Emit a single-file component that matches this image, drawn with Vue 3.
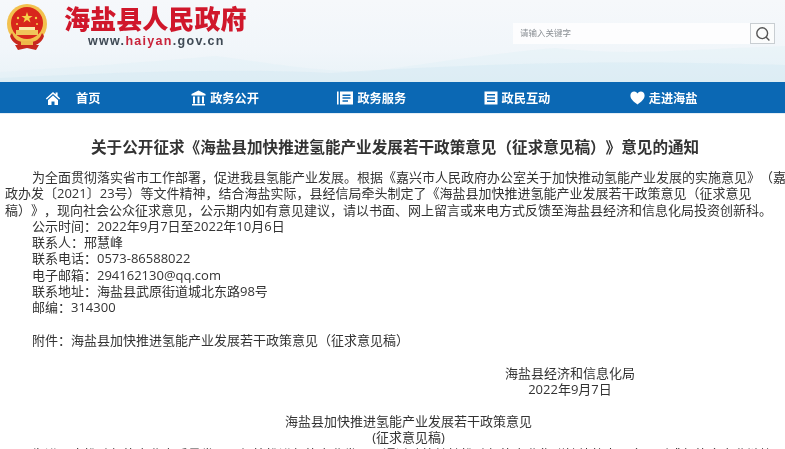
<template>
  <div class="page">
    <header class="site-head">
      <svg class="hills" width="785" height="50" viewBox="0 0 785 50" preserveAspectRatio="none">
        <path d="M0 40C90 34 150 30 215 24c50 6 85 14 150 16 60-8 120-18 190-24 70 8 130 2 230-2v36H0z" fill="#dcedf5" opacity=".3" />
        <path d="M0 46c120-6 230-10 330-5 120-8 260-14 455-8v17H0z" fill="#d3e8f2" opacity=".4" />
      </svg>
      <div class="brand">
        <svg class="emblem" width="46" height="48" viewBox="0 0 46 48">
          <circle cx="23" cy="21" r="20" fill="#f2c14e" />
          <circle cx="23" cy="20" r="16" fill="#d8261c" />
          <polygon points="23,9 24.4,13 28.6,13 25.2,15.5 26.5,19.5 23,17 19.5,19.5 20.8,15.5 17.4,13 21.6,13" fill="#f5d04a" />
          <circle cx="14" cy="15" r="1.2" fill="#f5d04a" />
          <circle cx="32" cy="15" r="1.2" fill="#f5d04a" />
          <circle cx="13" cy="21" r="1" fill="#f5d04a" />
          <circle cx="33" cy="21" r="1" fill="#f5d04a" />
          <path d="M12 27h22v5H12z" fill="#f0c45a" />
          <path d="M15 24h16v3H15z" fill="#fbe9a8" />
          <path d="M8 30c2 6 6 9 15 10 9-1 13-4 15-10l2 3c-2 7-8 10-17 11-9-1-15-4-17-11z" fill="#c8281e" />
          <path d="M11 42h24l-3 5-9-2-9 2z" fill="#c8281e" />
          <path d="M17 38h12v4H17z" fill="#eeb94a" />
        </svg>
        <div class="brand-text">
          <div class="site-name">海盐县人民政府</div>
          <div class="site-url">www.<span class="url-red">haiyan</span>.gov.cn</div>
        </div>
      </div>
      <div class="search">
        <div class="search-input">请输入关键字</div>
        <div class="search-btn">
          <svg width="16" height="16" viewBox="0 0 16 16" fill="none" stroke="#555" stroke-width="1.4">
            <circle cx="7.2" cy="7.2" r="5.4" />
            <path d="M11 11l3.4 3.4" />
          </svg>
        </div>
      </div>
    </header>

    <nav class="main-nav">
      <div v-for="item in navItems" :key="item.label" class="nav-item">
        <svg class="nav-icon" :width="item.w" height="16" :viewBox="`0 0 ${item.w} 16`" fill="#fff" v-html="item.icon"></svg>
        <span :class="{ 'home-label': item.label === '首页' }">{{ item.label }}</span>
      </div>
    </nav>

    <main class="article">
      <h1 class="title">关于公开征求《海盐县加快推进氢能产业发展若干政策意见（征求意见稿）》意见的通知</h1>
      <p class="lead">为全面贯彻落实省市工作部署，促进我县氢能产业发展。根据《嘉兴市人民政府办公室关于加快推动氢能产业发展的实施意见》（嘉政办发〔2021〕23号）等文件精神，结合海盐实际，县经信局牵头制定了《海盐县加快推进氢能产业发展若干政策意见（征求意见稿）》，现向社会公众征求意见，公示期内如有意见建议，请以书面、网上留言或来电方式反馈至海盐县经济和信息化局投资创新科。</p>
      <p v-for="line in contacts" :key="line" class="line">{{ line }}</p>
      <p class="line gap-top">附件：海盐县加快推进氢能产业发展若干政策意见（征求意见稿）</p>
      <div class="sign">
        <div>海盐县经济和信息化局</div>
        <div>2022年9月7日</div>
      </div>
      <div class="doc-title">
        <div>海盐县加快推进氢能产业发展若干政策意见</div>
        <div>(征求意见稿)</div>
      </div>
      <p class="lead">为进一步推动氢能产业高质量发展，加快推进氢能产业发展，通过政策扶持推动氢能产业集群持续壮大，全县形成氢能全产业链协同发展新格局。</p>
    </main>
  </div>
</template>

<script setup>
const navItems = [
  { label: '首页', w: 16, icon: '<path d="M8 2L0.8 8.4l1 1L8 4l6.2 5.4 1-1L12.6 6V2.4h-2v1.9z"/><path d="M3 10l5-4.4 5 4.4v5H9.5v-3.6h-3V15H3z"/>' },
  { label: '政务公开', w: 15, icon: '<path d="M7.5 0.5L14.5 4v1.4H0.5V4z"/><path d="M1 14h13v1.5H1z"/><path d="M2 6.4h2v7H2zM6.5 6.4h2v7h-2zM11 6.4h2v7h-2z"/>' },
  { label: '政务服务', w: 16, icon: '<path d="M0 1.5h1.6v13H0z"/><path fill-rule="evenodd" d="M3 1.5h13v13H3zM5.5 4.4v1.5h8V4.4zM5.5 7.3v1.5h8V7.3zM5.5 10.2v1.5H11v-1.5z"/>' },
  { label: '政民互动', w: 14, icon: '<path fill-rule="evenodd" d="M0.5 1.5h13v13h-13zM3 4v1.6h8V4zM3 7.2v1.6h8V7.2zM3 10.4V12h8v-1.6z"/>' },
  { label: '走进海盐', w: 15, icon: '<path d="M7.5 14.6C3.2 11.4 0.4 9 0.4 5.6 0.4 3.2 2.2 1.6 4.2 1.6c1.4 0 2.5.7 3.3 2 .8-1.3 1.9-2 3.3-2 2 0 3.8 1.6 3.8 4 0 3.4-2.8 5.8-7.1 9z"/>' }
]

const contacts = [
  '公示时间：2022年9月7日至2022年10月6日',
  '联系人：邢慧峰',
  '联系电话：0573-86588022',
  '电子邮箱：294162130@qq.com',
  '联系地址：海盐县武原街道城北东路98号',
  '邮编：314300'
]
</script>

<style scoped>
.page {
  width: 785px;
  height: 449px;
  overflow: hidden;
  background: #fff;
  font-family: "Open Sans", "Noto Sans CJK SC", sans-serif;
  color: #333;
  text-spacing-trim: space-all;
  filter: blur(0.3px);
}

.site-head {
  position: relative;
  height: 82px;
  box-sizing: border-box;
  display: flex;
  justify-content: space-between;
  align-items: flex-start;
  padding: 0 10px 0 4px;
  background: linear-gradient(180deg, #f6f8fb 0%, #f1f6fa 60%, #e9f2f7 100%);
}

.hills {
  position: absolute;
  left: 0;
  bottom: 0;
}

.brand,
.search {
  position: relative;
}

.brand {
  display: flex;
  align-items: flex-start;
}

.emblem {
  margin-top: 3px;
}

.brand-text {
  margin-left: 14px;
  display: flex;
  flex-direction: column;
  align-items: flex-start;
}

.site-name {
  margin-top: 2px;
  font-family: "Noto Sans CJK SC", sans-serif;
  font-size: 26.1px;
  line-height: 32px;
  font-weight: 900;
  color: #d0172b;
  white-space: nowrap;
}

.site-url {
  margin-left: 24px;
  font-family: "Liberation Sans", sans-serif;
  font-size: 12.5px;
  line-height: 14px;
  font-weight: 700;
  letter-spacing: 1.3px;
  color: #3f4a55;
}

.url-red {
  color: #c9233a;
}

.search {
  margin-top: 23px;
  width: 262px;
  height: 21px;
  display: flex;
}

.search-input {
  flex: 1;
  padding-left: 7px;
  background: #fdfdfe;
  font-size: 8.5px;
  line-height: 20px;
  color: #8a8f94;
}

.search-btn {
  width: 25px;
  height: 21px;
  box-sizing: border-box;
  border: 1px solid #c9ced2;
  background: #fbfcfc;
  display: flex;
  align-items: center;
  justify-content: center;
}

.main-nav {
  height: 32px;
  padding-left: 45px;
  display: grid;
  grid-template-columns: repeat(5, 146.2px);
  align-items: center;
  background: #0b68b4;
  border-bottom: 1px solid #e3edf5;
  box-sizing: border-box;
  color: #fff;
  font-family: "Noto Sans CJK SC", sans-serif;
  font-size: 12.2px;
  font-weight: 700;
}

.nav-item {
  display: flex;
  align-items: center;
  gap: 4px;
  white-space: nowrap;
}

.home-label {
  margin-left: 11px;
}

.article {
  width: 785px;
  padding-left: 5px;
  font-size: 13px;
  line-height: 16.3px;
}

.title {
  margin: 23px 0 12px 86px;
  font-size: 15.6px;
  line-height: 20px;
  font-weight: 700;
  color: #333;
  white-space: nowrap;
}

p {
  margin: 0;
}

.lead {
  text-indent: 27px;
}

.line {
  padding-left: 27px;
  white-space: nowrap;
}

.gap-top {
  margin-top: 16.3px;
}

.sign {
  margin: 16.3px 0 0 500px;
  width: 130px;
  text-align: center;
}

.doc-title {
  margin-top: 16px;
  padding-left: 22px;
  text-align: center;
}
</style>

<style>
html,
body {
  margin: 0;
  background: #fff;
}
</style>
